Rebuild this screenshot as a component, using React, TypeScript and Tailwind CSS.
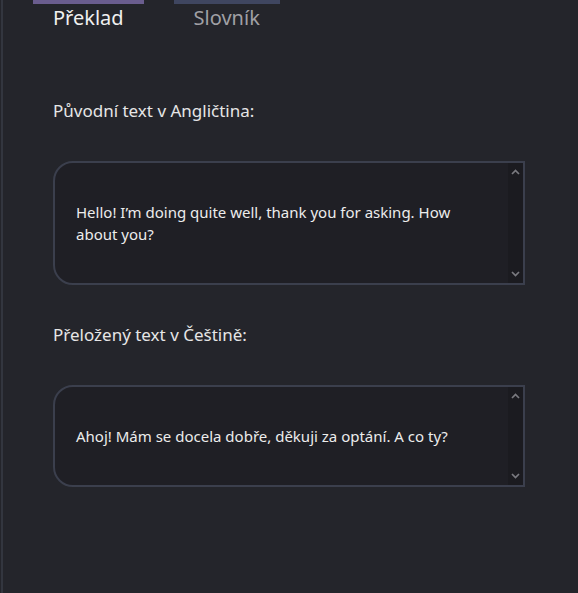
import { useState } from "react";

function ScrollColumn() {
  return (
    <div className="flex w-[15px] shrink-0 flex-col items-center justify-between bg-[#1b1b20] pb-[6px] pt-[6px] text-[#7a7a80]">
      <svg width="9" height="6" viewBox="0 0 9 6" fill="none">
        <path d="M1 5L4.5 1.5L8 5" stroke="currentColor" strokeWidth="1.7" />
      </svg>
      <svg width="9" height="6" viewBox="0 0 9 6" fill="none">
        <path d="M1 1L4.5 4.5L8 1" stroke="currentColor" strokeWidth="1.7" />
      </svg>
    </div>
  );
}

function TextBox({ value, onChange, height }: { value: string; onChange: (v: string) => void; height: string }) {
  return (
    <div className={`flex w-full overflow-hidden rounded-l-[20px] border-2 border-[#3b3f4d] bg-[#1f1f25] ${height}`}>
      <textarea
        value={value}
        onChange={(e) => onChange(e.target.value)}
        className="h-full min-w-0 flex-1 resize-none overflow-y-auto bg-transparent px-[21px] py-[38px] text-[15px] leading-[22px] text-[#ececec] outline-none [scrollbar-width:none]"
      />
      <ScrollColumn />
    </div>
  );
}

export default function App() {
  const [tab, setTab] = useState("preklad");
  const [source, setSource] = useState("Hello! I’m doing quite well, thank you for asking. How about you?");
  const [target, setTarget] = useState("Ahoj! Mám se docela dobře, děkuji za optání. A co ty?");

  return (
    <div className="min-h-screen bg-[#24252b] pl-px font-['Noto_Sans','Lato',sans-serif]">
      <div className="min-h-screen border-l-2 border-[#33363f] pl-[30px] pr-[33px]">
        {/* tabs */}
        <div className="flex gap-[30px]">
          <button
            onClick={() => setTab("preklad")}
            className={`border-t-4 px-5 text-[20px] leading-7 ${tab === "preklad" ? "border-[#6a5d8e] text-[#f0f0f0]" : "border-[#3f4660] text-[#a0a0a5]"}`}
          >
            Překlad
          </button>
          <button
            onClick={() => setTab("slovnik")}
            className={`border-t-4 px-5 text-[20px] leading-7 ${tab === "slovnik" ? "border-[#6a5d8e] text-[#f0f0f0]" : "border-[#3f4660] text-[#a0a0a5]"}`}
          >
            Slovník
          </button>
        </div>

        <div className="mt-[67px] flex flex-col gap-[38px] px-5">
          <label className="text-[17px] leading-6 text-[#e6e6e6]">Původní text v Angličtina:</label>
          <TextBox value={source} onChange={setSource} height="h-[124px]" />
          <label className="text-[17px] leading-6 text-[#e6e6e6]">Přeložený text v Češtině:</label>
          <TextBox value={target} onChange={setTarget} height="h-[102px]" />
        </div>
      </div>
    </div>
  );
}
